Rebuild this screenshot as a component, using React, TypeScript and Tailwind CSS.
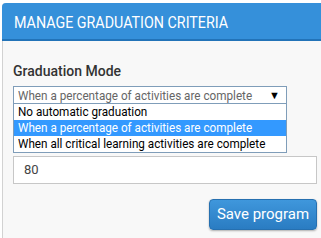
export default function App() {
  const options = [
    'No automatic graduation',
    'When a percentage of activities are complete',
    'When all critical learning activities are complete',
  ];
  const selected = 1;

  return (
    <div className="w-[321px] h-[238px] bg-white pt-[3px] pl-[2px] overflow-hidden font-['Roboto',sans-serif]">
      <div className="w-[340px] h-[235px] rounded-tl-[4px] border-l border-[#d2d2d2] bg-[#f8f8f8]">
        {/* Header */}
        <div className="h-[38px] rounded-tl-[4px] bg-[#3590da] border-b-2 border-[#2273b8] -ml-px pl-[12px] flex items-center">
          <h2 className="inline-block origin-left scale-x-[0.84] whitespace-nowrap text-[17px] text-white leading-none pt-[3px]">
            MANAGE GRADUATION CRITERIA
          </h2>
        </div>

        {/* Body */}
        <div className="pl-[10px] w-[314px]">
          <div className="pt-[22px] text-[14px] leading-[16px] text-[#333] font-medium">Graduation Mode</div>

          <div className="mt-[7px] w-[274px]">
            <div className="h-[18px] border border-[#7f9db9] bg-white flex items-center pl-[4px] pr-[6px] text-[13px] text-[#666]">
              <div className="flex-1 min-w-0 whitespace-nowrap leading-none">
                <span className="inline-block origin-left scale-x-[0.9]">{options[selected]}</span>
              </div>
              <span className="text-[11px] text-black leading-none">▼</span>
            </div>
            <div className="border border-t-0 border-[#7f9db9] bg-white">
              {options.map((o, i) => (
                <div
                  key={o}
                  className={`h-[16px] pl-[4px] text-[13px] leading-[16px] whitespace-nowrap ${
                    i === selected ? 'bg-[#3399ff] text-white' : 'text-black'
                  }`}
                >
                  <span className="inline-block origin-left scale-x-[0.9]">{o}</span>
                </div>
              ))}
            </div>
          </div>

          <div className="mt-[3px] h-[28px] w-[304px] border border-[#c7c7c7] bg-white flex items-center pl-[10px] text-[13px] text-[#444]">
            80
          </div>

          <div className="flex justify-end mt-[15px] w-[304px]">
            <button className="h-[31px] w-[108px] rounded-[4px] bg-gradient-to-b from-[#3f97dc] to-[#2a7cc2] border border-[#2670b0] text-white text-[15px] shadow-[0_1px_2px_rgba(0,0,0,0.3)]">
              Save program
            </button>
          </div>
        </div>
      </div>
    </div>
  );
}
